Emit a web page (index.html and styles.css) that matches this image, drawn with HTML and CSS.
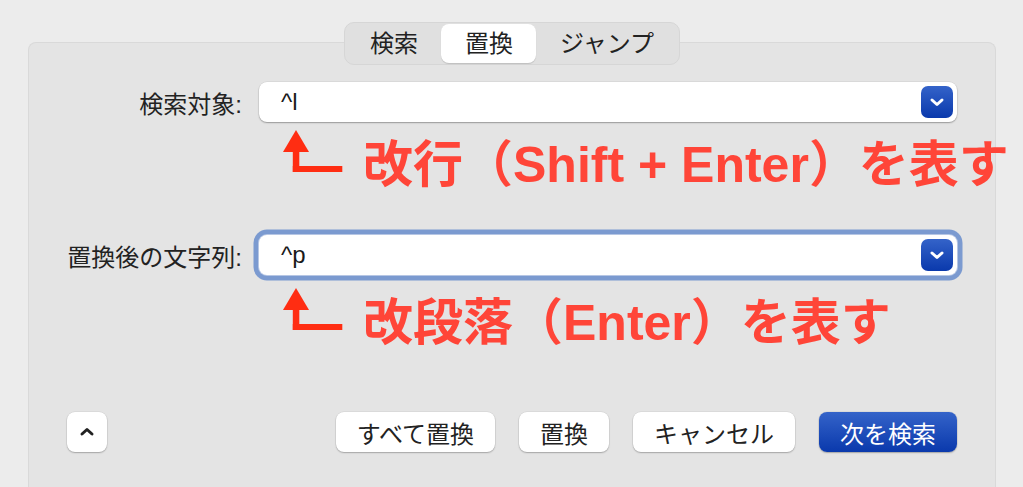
FILE: index.html
```html
<!DOCTYPE html>
<html lang="ja">
<head>
    <meta charset="UTF-8">
    <title>検索と置換</title>
    <link rel="stylesheet" href="styles.css">
</head>
<body>
    <div class="dialog">
        <div class="tabs">
            <span class="tab">検索</span>
            <span class="tab active">置換</span>
            <span class="tab">ジャンプ</span>
        </div>

        <div class="panel">
            <div class="form">
                <!-- 検索対象 -->
                <label class="field-label">検索対象:</label>
                <div class="combo">
                    <span class="combo-value">^l</span>
                    <span class="combo-btn">
                        <svg width="16" height="12" viewBox="0 0 16 12"><path d="M3 4 L8 8.5 L13 4" fill="none" stroke="#fff" stroke-width="3" stroke-linecap="round" stroke-linejoin="round"/></svg>
                    </span>
                </div>
                <div class="note note-first">
                    <svg class="note-arrow" width="60" height="42" viewBox="0 0 60 42"><path d="M0 22 L13 0 L26 22 Z" fill="#ff2d12"/><rect x="9.8" y="21" width="6.5" height="21" fill="#ff2d12"/><rect x="9.8" y="36" width="49.5" height="6" fill="#ff2d12"/></svg>
                    <span class="note-text">改行（<b>Shift + Enter</b>）を表す</span>
                </div>

                <!-- 置換後の文字列 -->
                <label class="field-label">置換後の文字列:</label>
                <div class="combo focused">
                    <span class="combo-value">^p</span>
                    <span class="combo-btn">
                        <svg width="16" height="12" viewBox="0 0 16 12"><path d="M3 4 L8 8.5 L13 4" fill="none" stroke="#fff" stroke-width="3" stroke-linecap="round" stroke-linejoin="round"/></svg>
                    </span>
                </div>
                <div class="note note-second">
                    <svg class="note-arrow" width="60" height="42" viewBox="0 0 60 42"><path d="M0 22 L13 0 L26 22 Z" fill="#ff2d12"/><rect x="9.8" y="21" width="6.5" height="21" fill="#ff2d12"/><rect x="9.8" y="36" width="49.5" height="6" fill="#ff2d12"/></svg>
                    <span class="note-text">改段落（<b>Enter</b>）を表す</span>
                </div>
            </div>

            <div class="actions">
                <button class="btn btn-icon">
                    <svg width="16" height="12" viewBox="0 0 16 12"><path d="M3 8 L8 3.5 L13 8" fill="none" stroke="#222" stroke-width="3" stroke-linecap="round" stroke-linejoin="round"/></svg>
                </button>
                <div class="action-group">
                    <button class="btn">すべて置換</button>
                    <button class="btn">置換</button>
                    <button class="btn">キャンセル</button>
                    <button class="btn btn-primary">次を検索</button>
                </div>
            </div>
        </div>
    </div>
</body>
</html>
```

FILE: styles.css
```css
* {
    margin: 0;
    padding: 0;
    box-sizing: border-box;
}

body {
    font-family: 'Liberation Sans', 'Noto Sans CJK JP', sans-serif;
    font-size: 24px;
    color: #222;
    background: #ececec;
    height: 487px;
    overflow: hidden;
}

.dialog {
    padding: 22px 27px 0 28px;
}

/* Segmented tabs */
.tabs {
    position: relative;
    z-index: 1;
    display: flex;
    width: fit-content;
    margin: 0 auto;
    padding: 1px;
    background: #e0e0e0;
    border: 1px solid #d6d6d6;
    border-radius: 10px;
}

.tab {
    height: 39px;
    line-height: 39px;
    padding: 0 23.5px;
    border-radius: 8px;
}

.tab.active {
    background: #fff;
    box-shadow: 0 1px 1px rgba(0, 0, 0, 0.15);
}

/* Panel */
.panel {
    margin-top: -23px;
    min-height: 450px;
    padding: 39px 38px 0 0;
    background: #e4e4e4;
    border: 1px solid #d9d9d9;
    border-bottom: none;
    border-radius: 8px 8px 0 0;
}

.form {
    display: grid;
    grid-template-columns: 213px minmax(0, 1fr);
    column-gap: 17px;
    align-items: center;
}

.field-label {
    text-align: right;
}

.combo {
    display: flex;
    align-items: center;
    justify-content: space-between;
    height: 40px;
    padding: 0 4px 0 22px;
    background: #fff;
    border-radius: 8px;
    box-shadow: 0 1px 1.5px rgba(0, 0, 0, 0.3), 0 0 0 0.5px rgba(0, 0, 0, 0.08);
}

.combo.focused {
    box-shadow: 0 0 0 1px #b6c6e4, 0 0 0 5.5px #7b9ad0;
}

.combo-value {
    font-size: 24px;
    color: #1a1a1a;
}

.combo-btn {
    display: flex;
    align-items: center;
    justify-content: center;
    width: 32px;
    height: 32px;
    border-radius: 7px;
    background: linear-gradient(#3463c9, #0a39ac);
}

/* Red annotations */
.note {
    grid-column: 2;
    display: flex;
    align-items: flex-start;
    padding-left: 24px;
    white-space: nowrap;
}

.note-first {
    margin: 8px 0 45px;
}

.note-second {
    margin-top: 13px;
}

.note-arrow {
    flex: none;
}

.note-text {
    margin: 10px 0 0 20px;
    font-size: 50px;
    font-weight: 700;
    line-height: 50px;
    color: #ff4538;
}

/* Bottom buttons */
.actions {
    display: flex;
    justify-content: space-between;
    margin-top: 64px;
    padding-left: 38px;
}

.action-group {
    display: flex;
    gap: 24px;
}

.btn {
    height: 40px;
    padding: 0 21px;
    font-family: inherit;
    font-size: 24px;
    color: #222;
    background: #fff;
    border: none;
    border-radius: 8px;
    box-shadow: 0 1px 1.5px rgba(0, 0, 0, 0.25), 0 0 0 0.5px rgba(0, 0, 0, 0.08);
}

.btn-icon {
    display: flex;
    align-items: center;
    justify-content: center;
    width: 40px;
    padding: 0;
}

.btn-primary {
    color: #fff;
    background: linear-gradient(#3463c9, #0a39ac);
}
```
